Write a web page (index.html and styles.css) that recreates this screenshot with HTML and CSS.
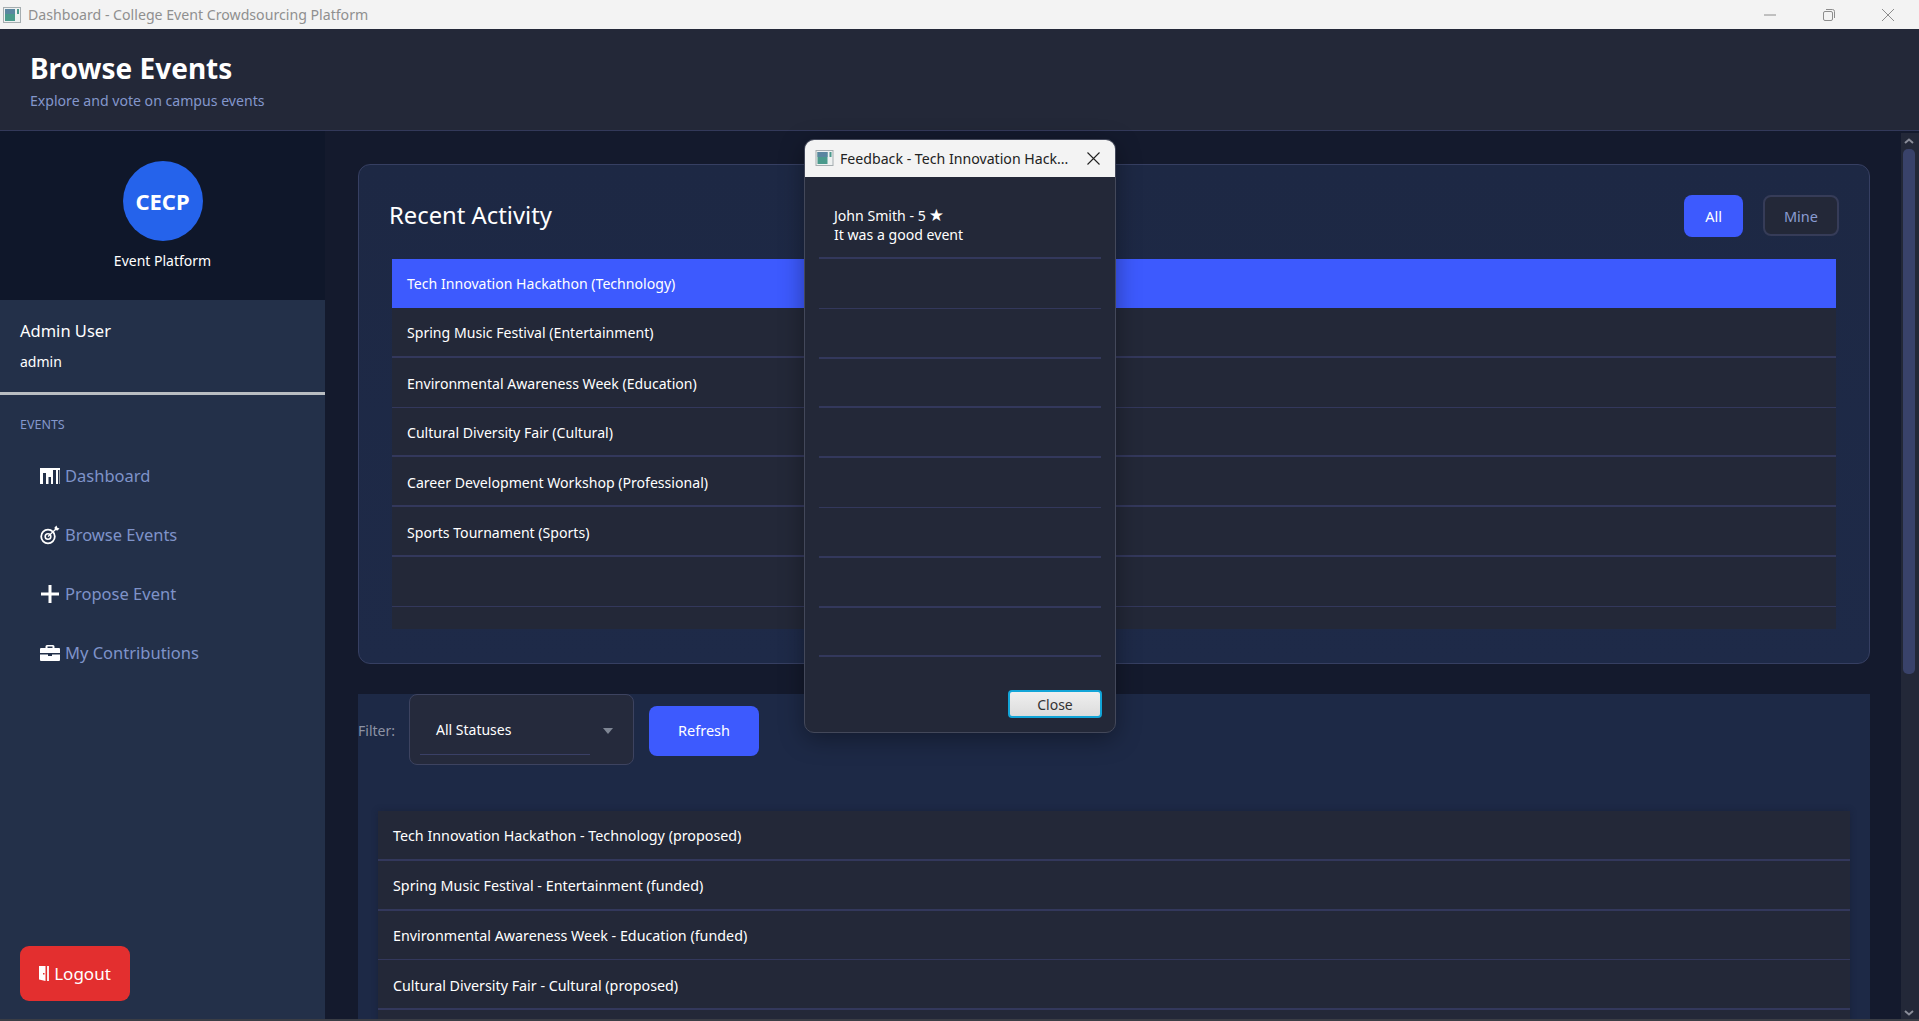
FILE: index.html
```html
<!DOCTYPE html>
<html lang="en">
<head>
<meta charset="utf-8">
<title>Dashboard - College Event Crowdsourcing Platform</title>
<link rel="stylesheet" href="styles.css">
</head>
<body>
<div class="app">
  <div class="titlebar">
    <svg class="app-icon" viewBox="0 0 18 16"><rect x=".5" y=".5" width="17" height="15" fill="#eef1f1" stroke="#a5adb0"/><rect x="2" y="2" width="10" height="12" fill="#4a9a8c"/><rect x="2" y="2" width="10" height="5" fill="#5a86a0"/><rect x="14" y="2" width="2" height="5" fill="#4a9a8c"/></svg>
    <span class="titlebar-text">Dashboard - College Event Crowdsourcing Platform</span>
    <div class="win-controls">
      <svg class="win-ctl" viewBox="0 0 12 12"><path d="M0 6h12" stroke="#8c8c8c" fill="none"/></svg>
      <svg class="win-ctl" viewBox="0 0 12 12"><rect x=".5" y="2.500" width="9" height="9" rx="1.500" stroke="#8c8c8c" fill="none"/><path d="M3 .5h6.500a2 2 0 0 1 2 2V9" stroke="#8c8c8c" fill="none"/></svg>
      <svg class="win-ctl" viewBox="0 0 12 12"><path d="M0 0l12 12M12 0L0 12" stroke="#8c8c8c" fill="none"/></svg>
    </div>
  </div>

  <header class="page-header">
    <h1 class="page-title">Browse Events</h1>
    <p class="page-sub">Explore and vote on campus events</p>
  </header>

  <div class="body-row">
    <aside class="sidebar">
      <div class="brand">
        <div class="brand-logo">CECP</div>
        <div class="brand-name">Event Platform</div>
      </div>
      <div class="user-box">
        <div class="user-name">Admin User</div>
        <div class="user-role">admin</div>
      </div>
      <div class="nav-label">EVENTS</div>
      <nav class="nav">
        <a class="nav-item">
          <svg class="nav-icon" viewBox="0 0 20 16"><rect width="20" height="16" fill="#fff"/><path fill="#233049" d="M3 5h3v11H3zM8.500 9H11v7H8.500zM13 2h3v14h-3zM18 2h1.500v14H18z"/></svg>
          <span>Dashboard</span>
        </a>
        <a class="nav-item">
          <svg class="nav-icon" viewBox="0 0 20 20"><circle cx="8" cy="11.500" r="6.800" fill="none" stroke="#fff" stroke-width="1.800"/><circle cx="8" cy="11.500" r="2.800" fill="none" stroke="#fff" stroke-width="1.600"/><path d="M8 11.500L16.500 3.500" stroke="#fff" stroke-width="1.300"/><path d="M14.500 2.500L16.500 .5l.8 2.200 2.200.8-2 2-2.500-.5z" fill="#fff"/></svg>
          <span>Browse Events</span>
        </a>
        <a class="nav-item">
          <svg class="nav-icon" viewBox="0 0 20 20"><path d="M1 10h18M10 1v18" stroke="#fff" stroke-width="3" fill="none"/></svg>
          <span>Propose Event</span>
        </a>
        <a class="nav-item">
          <svg class="nav-icon" viewBox="0 0 20 18"><path fill="#fff" d="M7 1h6a1.500 1.500 0 0 1 1.500 1.500V4H19a1 1 0 0 1 1 1v4H0V5a1 1 0 0 1 1-1h4.500V2.500A1.500 1.500 0 0 1 7 1zm.5 1.500V4h5V2.500zM0 10.500h8V12h4v-1.500h8V16a1 1 0 0 1-1 1H1a1 1 0 0 1-1-1z"/></svg>
          <span>My Contributions</span>
        </a>
      </nav>
      <button class="logout">
        <svg class="logout-icon" viewBox="0 0 10 15"><path fill="#fff" d="M0 0h6.500v15L0 13.500z"/><path fill="#e32f2f" d="M4 7h1.500v1.500H4z"/><path fill="#fff" d="M8 0h2v15H8z" opacity=".9"/></svg>
        <span>Logout</span>
      </button>
    </aside>

    <main class="content">
      <section class="panel">
        <div class="panel-head">
          <h2 class="panel-title">Recent Activity</h2>
          <div class="panel-actions">
            <button class="btn-all">All</button>
            <button class="btn-mine">Mine</button>
          </div>
        </div>
        <ul class="activity-list">
          <li class="row row-selected">Tech Innovation Hackathon (Technology)</li>
          <li class="row">Spring Music Festival (Entertainment)</li>
          <li class="row row-thin">Environmental Awareness Week (Education)</li>
          <li class="row">Cultural Diversity Fair (Cultural)</li>
          <li class="row">Career Development Workshop (Professional)</li>
          <li class="row">Sports Tournament (Sports)</li>
          <li class="row row-thin"></li>
          <li class="row row-tail"></li>
        </ul>
      </section>

      <section class="events">
        <div class="filter-bar">
          <span class="filter-label">Filter:</span>
          <div class="combo">
            <div class="combo-field">All Statuses</div>
            <svg class="combo-arrow" viewBox="0 0 10 6"><path d="M0 0h10L5 6z" fill="#7f8694"/></svg>
          </div>
          <button class="btn-refresh">Refresh</button>
        </div>
        <ul class="event-list">
          <li class="row row-event">Tech Innovation Hackathon - Technology (proposed)</li>
          <li class="row row-event">Spring Music Festival - Entertainment (funded)</li>
          <li class="row row-event row-thin">Environmental Awareness Week - Education (funded)</li>
          <li class="row row-event">Cultural Diversity Fair - Cultural (proposed)</li>
          <li class="row row-event"></li>
        </ul>
      </section>
    </main>

    <div class="scrollbar">
      <svg class="scroll-arrow" viewBox="0 0 10 6"><path d="M1 5l4-3.500L9 5" fill="none" stroke="#8a8d99" stroke-width="2"/></svg>
      <div class="scroll-thumb"></div>
      <div class="scroll-spacer"></div>
      <svg class="scroll-arrow" viewBox="0 0 10 6"><path d="M1 1l4 3.500L9 1" fill="none" stroke="#8a8d99" stroke-width="2"/></svg>
    </div>
  </div>
  <div class="window-edge"></div>

  <div class="dialog">
    <div class="dialog-title">
      <svg class="dialog-icon" viewBox="0 0 18 16"><rect x=".5" y=".5" width="17" height="15" fill="#eef1f1" stroke="#a5adb0"/><rect x="2" y="2" width="10" height="12" fill="#4a9a8c"/><rect x="2" y="2" width="10" height="5" fill="#5a86a0"/><rect x="14" y="2" width="2" height="5" fill="#4a9a8c"/></svg>
      <span class="dialog-title-text">Feedback - Tech Innovation Hack...</span>
      <svg class="dialog-close" viewBox="0 0 13 13"><path d="M.5.500l12 12M12.500.500l-12 12" stroke="#222" stroke-width="1.100" fill="none"/></svg>
    </div>
    <ul class="feedback-list">
      <li class="feedback-row feedback-first">John Smith - 5<span class="star">★</span><br>It was a good event</li>
      <li class="feedback-row feedback-thin"></li>
      <li class="feedback-row"></li>
      <li class="feedback-row"></li>
      <li class="feedback-row"></li>
      <li class="feedback-row feedback-thin"></li>
      <li class="feedback-row"></li>
      <li class="feedback-row"></li>
      <li class="feedback-row"></li>
    </ul>
    <div class="dialog-foot">
      <button class="btn-close">Close</button>
    </div>
  </div>
</div>
</body>
</html>
```

FILE: styles.css
```css
* { box-sizing: border-box; }
html, body { margin: 0; padding: 0; height: 100%; overflow: hidden; background: #141a2d; }
body { font-family: "Noto Sans", "Open Sans", sans-serif; font-size: 14px; color: #fff; }
ul { list-style: none; margin: 0; padding: 0; }
h1, h2, p { margin: 0; }
button { font-family: inherit; cursor: pointer; }

.app { position: relative; width: 1919px; height: 1021px; display: flex; flex-direction: column; overflow: hidden; }

/* window chrome */
.titlebar { flex: 0 0 29px; background: #f3f3f3; display: flex; align-items: center; padding-left: 3px; }
.app-icon { width: 18px; height: 16px; margin-right: 7px; }
.titlebar-text { font-size: 14.150px; color: #8f8f8f; }
.win-controls { margin-left: auto; display: flex; gap: 47px; padding-right: 25px; align-items: center; }
.win-ctl { width: 12px; height: 12px; }

/* header */
.page-header { flex: 0 0 102px; background: #232838; border-bottom: 1px solid #33395a; padding: 21px 30px 0; }
.page-title { font-size: 28px; line-height: 36px; font-weight: 700; color: #fff; }
.page-sub { font-size: 14.100px; line-height: 20px; margin-top: 5px; color: #8497cc; }

.body-row { flex: 1; min-height: 0; display: flex; }

/* sidebar */
.sidebar { flex: 0 0 325px; background: #233049; display: flex; flex-direction: column; }
.brand { flex: 0 0 169px; background: #0f172a; display: flex; flex-direction: column; align-items: center; padding-top: 30px; }
.brand-logo { width: 80px; height: 80px; border-radius: 50%; background: #2563eb; display: flex; align-items: center; justify-content: center; font-size: 22px; font-weight: 700; }
.brand-name { margin-top: 10px; font-size: 14px; line-height: 20px; }
.user-box { flex: 0 0 95px; border-bottom: 3px solid #b9bdc2; padding: 19px 20px 0; }
.user-name { font-size: 16.500px; line-height: 24px; }
.user-role { font-size: 14px; line-height: 20px; margin-top: 9px; }
.nav-label { margin: 21px 20px 0; font-size: 12.500px; line-height: 18px; color: #8497cc; }
.nav { display: flex; flex-direction: column; margin-top: 12px; }
.nav-item { height: 59px; display: flex; align-items: center; padding-left: 40px; font-size: 16.500px; color: #7f93c9; }
.nav-icon { width: 20px; height: 20px; margin-right: 5px; flex: none; }
.logout { margin: auto 0 18px 20px; width: 110px; height: 55px; border: 0; border-radius: 9px; background: #e32f2f; color: #fff; font-size: 17px; display: flex; align-items: center; justify-content: center; gap: 5px; }
.logout-icon { width: 10px; height: 15px; }

/* content */
.content { flex: 1; min-width: 0; padding: 33px 31px 0 33px; overflow: hidden; background: #141a2d; }
.panel { height: 500px; background: linear-gradient(180deg, #1d2844, #1e2a48); border: 1px solid #363f62; border-radius: 12px; padding: 30px 30px 0 31px; }
.panel-head { display: flex; align-items: center; justify-content: space-between; height: 42px; }
.panel-title { font-size: 23.800px; font-weight: 400; color: #fff; margin: 0 0 3px -1px; }
.panel-actions { display: flex; gap: 20px; }
.btn-all { width: 59px; height: 42px; border: 0; border-radius: 8px; background: #3d5afe; color: #fff; font-size: 14.500px; }
.btn-mine { width: 76px; height: 41px; border: 2px solid #363c58; border-radius: 8px; background: #232838; color: #8a9cd2; font-size: 14.500px; }
.activity-list { margin: 22px 3px 0 2px; }
.row { height: 49.800px; display: flex; align-items: center; padding: 2px 0 0 15px; background: #232838; border-bottom: 2px solid #33385c; font-size: 14.100px; color: #fff; }
.row-event { font-size: 14.300px; }
.row-thin { border-bottom-width: 1px; }
.row-selected { background: #3d5afe; border-bottom: 0; height: 49px; padding-top: 0; }
.row-tail { height: 22px; border-bottom: 0; }

.events { height: 400px; margin-top: 30px; background: #1d2946; }
.filter-bar { display: flex; align-items: center; height: 71px; }
.filter-label { width: 51px; font-size: 14px; color: #8d93a4; padding-top: 2px; }
.combo { width: 225px; height: 71px; display: flex; align-items: center; background: #252a3c; border: 1px solid #3d4360; border-radius: 8px; padding: 0 10px; }
.combo-field { width: 170px; height: 50px; padding: 15px 0 0 16px; border-bottom: 1px solid #3a4066; font-size: 14px; color: #fff; }
.combo-arrow { width: 10px; height: 6px; margin: 2px 0 0 13px; }
.btn-refresh { width: 110px; height: 50px; margin: 2px 0 0 15px; padding: 0 0 2px; border: 0; border-radius: 8px; background: #3d5afe; color: #fff; font-size: 14.500px; }
.event-list { margin: 46px 20px 0; box-shadow: 0 0 6px rgba(20,26,45,.4); }

/* scrollbar */
.scrollbar { flex: 0 0 18px; margin: 2px 0 0 0; background: #232838; display: flex; flex-direction: column; align-items: center; padding: 5px 3px 3px 0; }
.scroll-arrow { width: 10px; height: 6px; flex: none; }
.scroll-thumb { width: 12px; height: 525px; margin-top: 5px; background: #39426a; border-radius: 5px; flex: none; }
.scroll-spacer { flex: 1; }
.window-edge { flex: 0 0 2px; background: #3a3d45; }

/* dialog */
.dialog { position: absolute; left: 804px; top: 139px; width: 312px; height: 594px; display: flex; flex-direction: column; background: #232838; border: 1px solid #43485a; border-radius: 10px; box-shadow: 0 6px 24px rgba(0,0,0,.35); overflow: hidden; }
.dialog-title { flex: 0 0 37px; background: #f3f3f3; display: flex; align-items: center; padding: 0 0 1px 10px; }
.dialog-icon { width: 19px; height: 16px; margin-right: 6px; }
.dialog-title-text { font-size: 14.150px; color: #222; white-space: nowrap; }
.dialog-close { width: 13px; height: 13px; margin-left: auto; margin-right: 15px; }
.feedback-list { margin: 14px 14px 0; }
.feedback-row { height: 49.800px; padding-left: 15px; border-bottom: 2px solid #33385c; font-size: 14.100px; line-height: 19px; color: #fff; }
.feedback-thin { border-bottom-width: 1px; }
.feedback-first { height: 68px; padding-top: 15px; }
.star { font-family: "DejaVu Sans", sans-serif; font-size: 17px; line-height: 19px; margin-left: 3px; }
.dialog-foot { display: flex; justify-content: flex-end; margin-top: 33px; padding-right: 13px; }
.btn-close { width: 94px; height: 28px; border: 2px solid #12a5d8; border-radius: 4px; background: linear-gradient(180deg, #efefef, #dcdcdc); color: #333; font-size: 14px; padding: 0; }
```
